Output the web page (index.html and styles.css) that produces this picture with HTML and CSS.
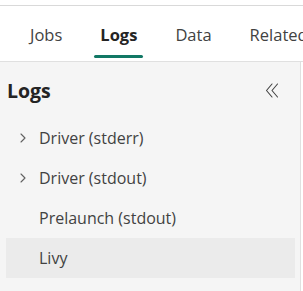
FILE: index.html
```html
<!DOCTYPE html>
<html>
<head>
<meta charset="utf-8">
<link rel="stylesheet" href="styles.css">
</head>
<body>
<div class="top-rule"></div>
<nav class="tabs">
  <div class="tab">Jobs</div>
  <div class="tab active">Logs</div>
  <div class="tab">Data</div>
  <div class="tab">Related</div>
</nav>
<aside class="panel">
  <div class="panel-head">
    <span class="panel-title">Logs</span>
    <svg class="collapse" width="14" height="15" viewBox="0 0 14 15" fill="none" stroke="#424242" stroke-width="1.1" stroke-linecap="round" stroke-linejoin="round">
      <path d="M7 1 L1.5 7.5 L7 14"/>
      <path d="M12.5 1 L7 7.5 L12.5 14"/>
    </svg>
  </div>
  <ul class="list">
    <li class="item"><svg class="chev" width="6" height="10" viewBox="0 0 6 10" fill="none" stroke="#616161" stroke-width="1.1" stroke-linecap="round" stroke-linejoin="round"><path d="M1 1 L5 5 L1 9"/></svg><span class="label">Driver (stderr)</span></li>
    <li class="item"><svg class="chev" width="6" height="10" viewBox="0 0 6 10" fill="none" stroke="#616161" stroke-width="1.1" stroke-linecap="round" stroke-linejoin="round"><path d="M1 1 L5 5 L1 9"/></svg><span class="label">Driver (stdout)</span></li>
    <li class="item"><span class="chev-space"></span><span class="label">Prelaunch (stdout)</span></li>
    <li class="item selected"><span class="chev-space"></span><span class="label">Livy</span></li>
  </ul>
</aside>
</body>
</html>
```

FILE: styles.css
```css
html, body {
  margin: 0;
  padding: 0;
  background: #ffffff;
  font-family: "Open Sans", "Noto Sans", sans-serif;
  overflow: hidden;
}
.top-rule {
  margin-top: 5px;
  height: 1px;
  background: #d9d9d9;
}
.tabs {
  display: flex;
  height: 55px;
  padding-left: 11px;
  border-bottom: 1px solid #e0e0e0;
  white-space: nowrap;
  overflow: hidden;
}
.tab {
  position: relative;
  display: flex;
  align-items: center;
  flex-shrink: 0;
  padding: 2px 19px 0 19px;
  font-size: 16.5px;
  color: #424242;
}
.tab.active {
  font-weight: 700;
  color: #242424;
}
.tab.active::after {
  content: "";
  position: absolute;
  left: 13px;
  right: 13px;
  bottom: 3px;
  height: 3px;
  border-radius: 2px;
  background: #117865;
}
.panel {
  width: 301px;
  height: 240px;
  background: #f5f5f5;
  border-right: 1px solid #e0e0e0;
  box-sizing: border-box;
}
.panel-head {
  display: flex;
  align-items: center;
  justify-content: space-between;
  height: 56px;
  padding: 0 21px 0 7px;
}
.panel-title {
  font-size: 19.5px;
  font-weight: 700;
  color: #242424;
}
.collapse {
  display: block;
}
.list {
  list-style: none;
  margin: 0;
  padding: 0 5px 0 6px;
}
.item {
  display: flex;
  align-items: center;
  height: 40px;
  font-size: 16px;
  color: #424242;
}
.item.selected {
  background: #ebebeb;
}
.chev, .chev-space {
  display: block;
  width: 6px;
  margin-left: 14px;
  margin-right: 13px;
}
```
